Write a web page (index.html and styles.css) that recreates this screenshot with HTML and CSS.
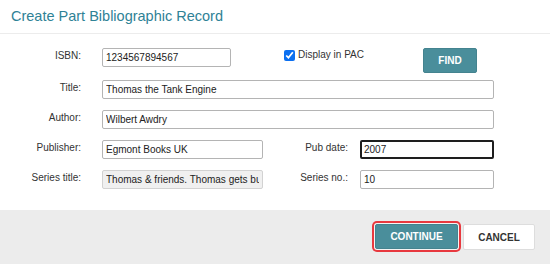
FILE: index.html
```html
<!DOCTYPE html>
<html lang="en">
<head>
    <meta charset="UTF-8">
    <meta name="viewport" content="width=device-width, initial-scale=1.0">
    <title>Create Part Bibliographic Record</title>
    <link rel="stylesheet" href="styles.css">
</head>
<body>
    <div class="dialog">
        <div class="dialog-header">
            <h1>Create Part Bibliographic Record</h1>
        </div>

        <form class="record-form">
            <label class="field-label" for="isbn">ISBN:</label>
            <div class="isbn-row">
                <input id="isbn" class="text-input isbn-input" type="text" value="1234567894567">
                <label class="pac-check"><input type="checkbox" checked> Display in PAC</label>
                <button type="button" class="btn btn-primary find-btn">FIND</button>
            </div>

            <label class="field-label" for="title">Title:</label>
            <input id="title" class="text-input wide" type="text" value="Thomas the Tank Engine">

            <label class="field-label" for="author">Author:</label>
            <input id="author" class="text-input wide" type="text" value="Wilbert Awdry">

            <label class="field-label" for="publisher">Publisher:</label>
            <input id="publisher" class="text-input" type="text" value="Egmont Books UK">
            <label class="field-label side" for="pubdate">Pub date:</label>
            <input id="pubdate" class="text-input focused" type="text" value="2007">

            <label class="field-label" for="series">Series title:</label>
            <input id="series" class="text-input readonly" type="text" value="Thomas &amp; friends. Thomas gets bumped" readonly>
            <label class="field-label side" for="seriesno">Series no.:</label>
            <input id="seriesno" class="text-input" type="text" value="10">
        </form>

        <div class="dialog-footer">
            <button type="button" class="btn btn-primary continue-btn">CONTINUE</button>
            <button type="button" class="btn btn-default">CANCEL</button>
        </div>
    </div>
</body>
</html>
```

FILE: styles.css
```css
body {
    margin: 0;
    padding: 0;
    font-family: 'Liberation Sans', Arial, sans-serif;
    background: #ffffff;
    color: #333333;
}

.dialog {
    width: 550px;
    height: 264px;
    display: flex;
    flex-direction: column;
    background: #ffffff;
}

.dialog-header {
    height: 34px;
    border-bottom: 1px solid #ececec;
    padding: 0 11px;
    box-sizing: border-box;
}

.dialog-header h1 {
    margin: 0;
    padding-top: 8px;
    font-size: 14.5px;
    line-height: 17px;
    font-weight: normal;
    color: #2f8296;
}

.record-form {
    display: grid;
    grid-template-columns: 102px 161px 97px 134px;
    row-gap: 11px;
    align-items: start;
    align-content: start;
    padding: 14px 0 0;
    flex: 1;
}

.field-label {
    font-size: 10px;
    line-height: 12px;
    padding: 2px 21px 0 0;
    text-align: right;
    color: #333333;
}

.field-label.side {
    padding-right: 12px;
}

.text-input {
    box-sizing: border-box;
    height: 19px;
    width: 100%;
    margin: 0;
    padding: 0 3px;
    border: 1px solid #b4b4b4;
    border-radius: 2px;
    font-family: 'Liberation Sans', Arial, sans-serif;
    font-size: 10px;
    color: #222222;
    background: #ffffff;
}

.text-input.wide {
    grid-column: 2 / 5;
}

.text-input.focused {
    border: 2px solid #1e1e1e;
    padding: 0 2px;
}

.text-input.readonly {
    background: #f0f0f0;
    border-color: #d2d2d2;
    overflow: hidden;
}

.isbn-row {
    grid-column: 2 / 5;
    display: flex;
    align-items: flex-start;
    height: 21px;
}

.isbn-input {
    width: 129px;
}

.pac-check {
    display: flex;
    align-items: center;
    margin-left: 53px;
    margin-top: 1px;
    font-size: 10px;
    line-height: 12px;
    color: #333333;
}

.pac-check input {
    width: 11px;
    height: 11px;
    margin: 0 3px 0 0;
    accent-color: #0b6ff0;
}

.btn {
    box-sizing: border-box;
    font-family: 'Liberation Sans', Arial, sans-serif;
    font-size: 10px;
    font-weight: bold;
    cursor: pointer;
    border-radius: 2px;
}

.btn-primary {
    background-color: #4a8e9b;
    color: #ffffff;
    border: 1px solid #44838f;
}

.find-btn {
    width: 54px;
    height: 25px;
    margin-left: auto;
    margin-right: 17px;
    flex-shrink: 0;
}

.dialog-footer {
    height: 54px;
    box-sizing: border-box;
    background: #ececec;
    display: flex;
    justify-content: flex-end;
    align-items: flex-start;
    padding: 14px 15px 0 0;
    gap: 5px;
}

.continue-btn {
    width: 83px;
    height: 25px;
    box-shadow: 0 0 0 1px #f4f4f4, 0 0 0 3px #e8393f;
}

.btn-default {
    width: 72px;
    height: 26px;
    background: #ffffff;
    color: #333333;
    border: 1px solid #dddddd;
}
```
